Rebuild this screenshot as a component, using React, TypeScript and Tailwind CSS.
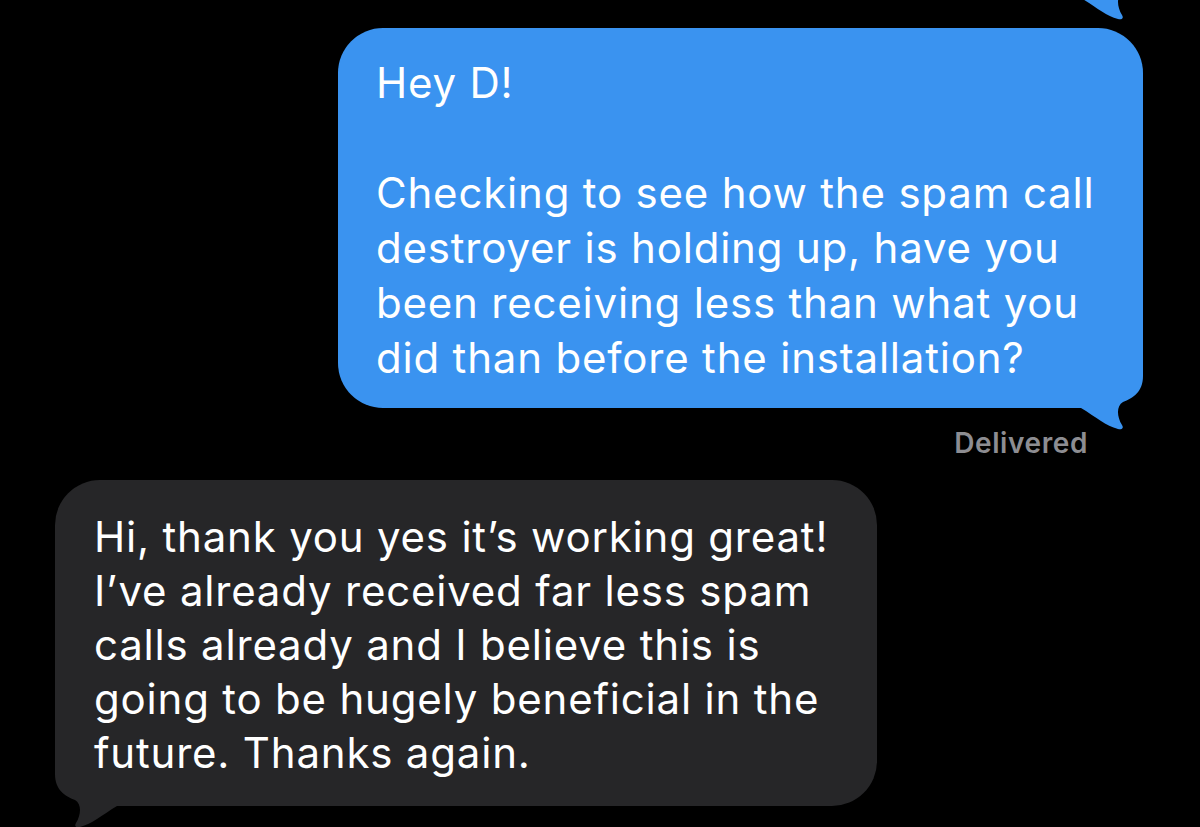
const Tail = ({ color, className }: { color: string; className: string }) => (
  <svg viewBox="0 0 70 90" className={className} aria-hidden="true">
    <path
      d="M70,0 V36 C70,52 60,58 50,62 C43,66 44,77 49,85 C51,88 49,90 45,89 C33,86 23,77 8,68 H0 V0 Z"
      fill={color}
    />
  </svg>
);

const blueLines = [
  "Hey D!",
  "\u00a0",
  "Checking to see how the spam call",
  "destroyer is holding up, have you",
  "been receiving less than what you",
  "did than before the installation?",
];

const grayLines = [
  "Hi, thank you yes it\u2019s working great!",
  "I\u2019ve already received far less spam",
  "calls already and I believe this is",
  "going to be hugely beneficial in the",
  "future. Thanks again.",
];

const App = () => {
  return (
    <div
      className="relative h-[827px] w-[1200px] overflow-hidden bg-black text-white"
      style={{ fontFamily: "Inter, 'Liberation Sans', sans-serif" }}
    >
      {/* tail of the message above, scrolled off */}
      <Tail color="#3a93f0" className="absolute right-[57px] top-[-70px] h-[90px] w-[70px]" />

      <div className="flex flex-col pt-[28px]">
        <div className="relative mr-[57px] ml-auto w-[805px] rounded-[45px] bg-[#3a93f0] pl-[38px] pt-[27px] pb-[23px] text-[42px] leading-[55px] tracking-[0.8px]">
          <Tail color="#3a93f0" className="absolute right-0 bottom-[-22px] h-[90px] w-[70px]" />
          <div className="relative">
            {blueLines.map((line, i) => (
              <div key={i} className="whitespace-nowrap">
                {line}
              </div>
            ))}
          </div>
        </div>

        <div className="mr-[112px] ml-auto pt-[18px] text-[28px] font-semibold leading-[34px] tracking-[0.6px] text-[#8d8d92]">
          Delivered
        </div>

        <div className="relative ml-[55px] mt-[20px] w-[822px] rounded-[45px] bg-[#262628] pl-[39px] pt-[30px] pb-[26px] text-[42px] leading-[54px] tracking-[0.8px]">
          <Tail color="#262628" className="absolute left-0 bottom-[-22px] h-[90px] w-[70px] -scale-x-100" />
          <div className="relative">
            {grayLines.map((line, i) => (
              <div key={i} className="whitespace-nowrap">
                {line}
              </div>
            ))}
          </div>
        </div>
      </div>
    </div>
  );
};

export default App;
